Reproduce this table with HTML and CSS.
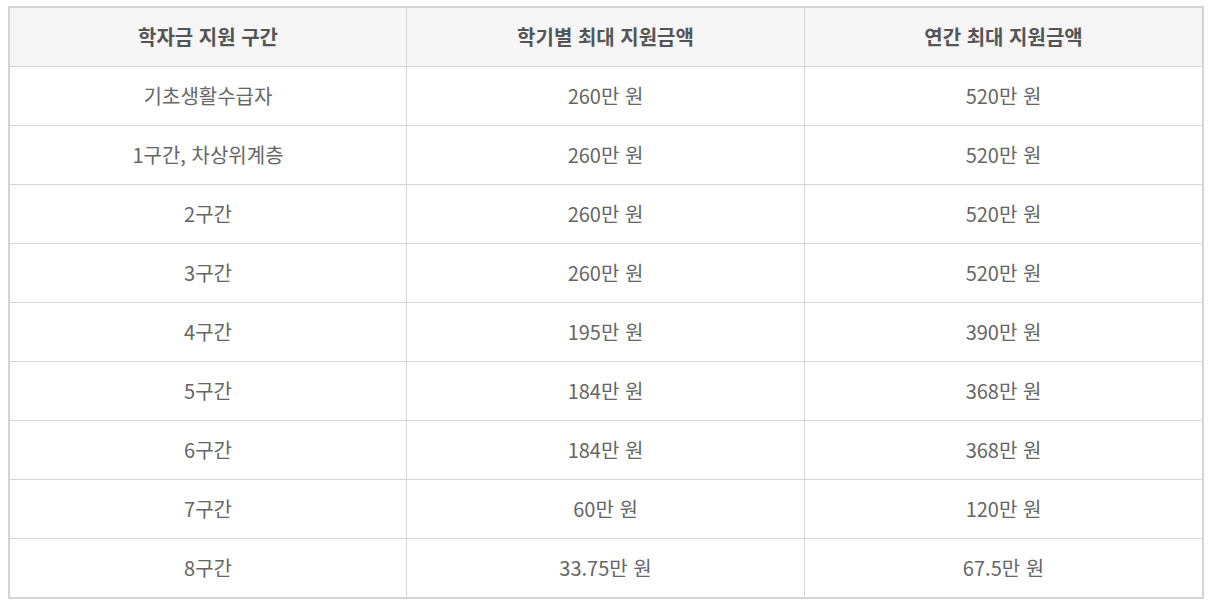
FILE: index.html
```html
<!DOCTYPE html>
<html lang="ko">
<head>
<meta charset="utf-8">
<title>학자금 지원</title>
<link rel="stylesheet" href="styles.css">
</head>
<body>
<table class="aid-table">
  <thead>
    <tr>
      <th class="c1">학자금 지원 구간</th>
      <th class="c2">학기별 최대 지원금액</th>
      <th class="c3">연간 최대 지원금액</th>
    </tr>
  </thead>
  <tbody>
    <tr><td>기초생활수급자</td><td>260만 원</td><td>520만 원</td></tr>
    <tr><td>1구간, 차상위계층</td><td>260만 원</td><td>520만 원</td></tr>
    <tr><td>2구간</td><td>260만 원</td><td>520만 원</td></tr>
    <tr><td>3구간</td><td>260만 원</td><td>520만 원</td></tr>
    <tr><td>4구간</td><td>195만 원</td><td>390만 원</td></tr>
    <tr><td>5구간</td><td>184만 원</td><td>368만 원</td></tr>
    <tr><td>6구간</td><td>184만 원</td><td>368만 원</td></tr>
    <tr><td>7구간</td><td>60만 원</td><td>120만 원</td></tr>
    <tr><td>8구간</td><td>33.75만 원</td><td>67.5만 원</td></tr>
  </tbody>
</table>
</body>
</html>
```
FILE: styles.css
```css
html, body {
  margin: 0;
  padding: 0;
  background: #ffffff;
}

body {
  padding: 6px 8px;
  font-family: "Noto Sans CJK KR", "Noto Sans", sans-serif;
}

.aid-table {
  width: 1196px;
  border: 2px solid #d4d4d4;
  border-collapse: separate;
  border-spacing: 0;
  table-layout: fixed;
}

.aid-table .c1 { width: 396px; }
.aid-table .c2 { width: 397px; }
.aid-table .c3 { width: auto; }

.aid-table th,
.aid-table td {
  padding: 0;
  height: 58px;
  line-height: 58px;
  text-align: center;
  font-size: 20px;
  border-bottom: 1px solid #d4d4d4;
  border-right: 1px solid #d4d4d4;
  vertical-align: middle;
}

.aid-table th:last-child,
.aid-table td:last-child {
  border-right: none;
}

.aid-table tbody tr:last-child td {
  border-bottom: none;
}

.aid-table th {
  background: #f6f6f6;
  color: #555555;
  font-weight: 700;
}

.aid-table td {
  color: #666666;
  font-weight: 400;
}
```
